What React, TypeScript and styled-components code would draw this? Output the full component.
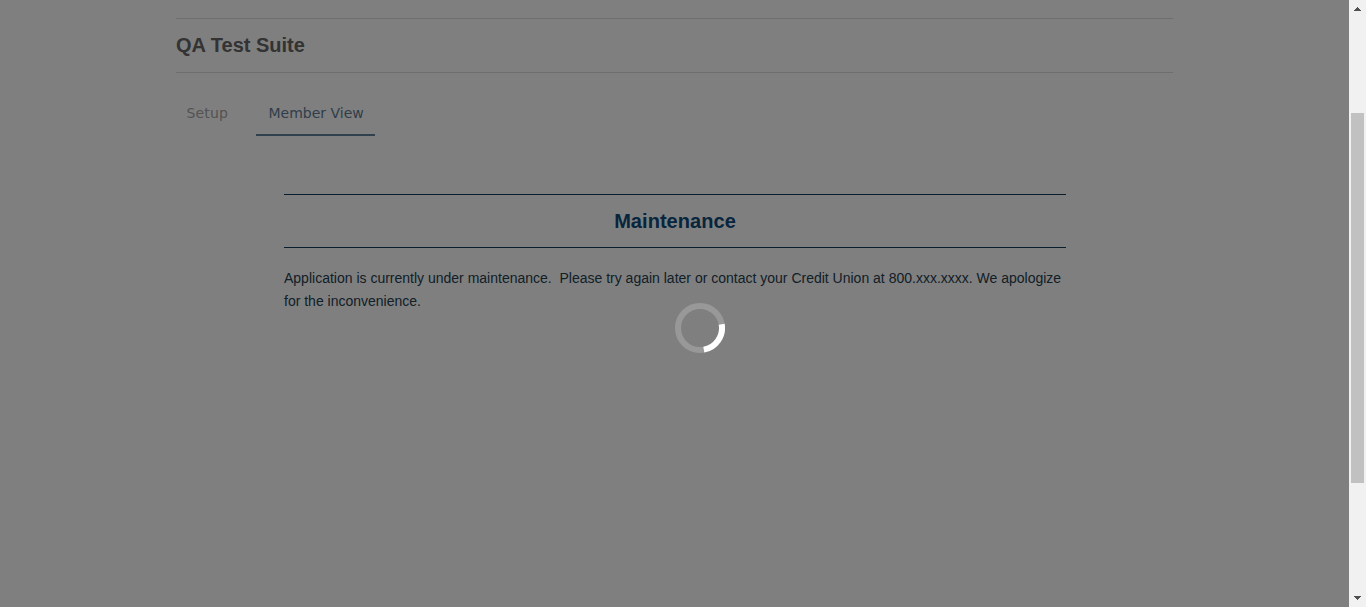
import React from "react";
import styled, { createGlobalStyle } from "styled-components";

const GlobalStyle = createGlobalStyle`
  * { box-sizing: border-box; }
  body { margin: 0; overflow: hidden; background: #fff; }
`;

const Window = styled.div`
  display: flex;
  height: 607px;
  width: 1366px;
  overflow: hidden;
  font-family: "Liberation Sans", Arial, sans-serif;
`;

const Viewport = styled.div`
  position: relative;
  display: flex;
  flex-direction: column;
  width: 1349px;
  background: #fff;
`;

const Page = styled.main`
  flex: 1;
  width: 997px;
  margin: 18px 0 0 176px;
`;

const SuiteHeader = styled.header`
  height: 55px;
  border-top: 1px solid #ddd;
  border-bottom: 1px solid #ddd;
`;

const SuiteTitle = styled.h1`
  margin: 0;
  font-size: 20px;
  line-height: 52px;
  color: #666;
`;

const Tabs = styled.nav`
  display: flex;
  gap: 16px;
  margin-top: 17px;
`;

const Tab = styled.a<{ $active?: boolean }>`
  width: ${(p) => (p.$active ? 119 : 64)}px;
  height: 46px;
  padding-left: ${(p) => (p.$active ? 12.5 : 10.5)}px;
  border-bottom: 2px solid ${(p) => (p.$active ? "#5f829d" : "transparent")};
  font: 14px/46px "DejaVu Sans", Verdana, sans-serif;
  letter-spacing: ${(p) => (p.$active ? 0 : 0.15)}px;
  white-space: nowrap;
  color: ${(p) => (p.$active ? "#5f7d96" : "#a6a6a6")};
`;

const Notice = styled.section`
  width: 782px;
  margin: 58px 0 0 108px;
`;

const NoticeTitle = styled.h2`
  height: 54px;
  margin: 0;
  border-top: 1px solid #123c5a;
  border-bottom: 1px solid #123c5a;
  font-size: 20px;
  line-height: 52px;
  letter-spacing: 0.05px;
  text-align: center;
  color: #0f4c7a;
`;

const NoticeText = styled.p`
  margin: 19px 0 0;
  font-size: 14px;
  line-height: 23px;
  white-space: pre-wrap;
  color: #25404f;
`;

const Overlay = styled.div`
  position: absolute;
  inset: 0;
  background: rgba(0, 0, 0, 0.5);
`;

const Spinner = styled.svg`
  position: absolute;
  left: 675px;
  top: 303px;
  width: 50px;
  height: 50px;
`;

const Scrollbar = styled.aside`
  display: flex;
  flex-direction: column;
  width: 17px;
  background: #f1f1f1;
`;

const Arrow = styled.svg`
  display: block;
  width: 17px;
  height: 17px;
  fill: #505050;
`;

const Track = styled.div`
  flex: 1;
  padding: 96px 2px 0;
`;

const Thumb = styled.div`
  height: 370px;
  background: #c1c1c1;
`;

export default function App() {
  return (
    <>
      <GlobalStyle />
      <Window>
        <Viewport>
          <Page>
            <SuiteHeader>
              <SuiteTitle>QA Test Suite</SuiteTitle>
            </SuiteHeader>
            <Tabs>
              <Tab>Setup</Tab>
              <Tab $active>Member View</Tab>
            </Tabs>
            <Notice>
              <NoticeTitle>Maintenance</NoticeTitle>
              <NoticeText>
                {"Application is currently under maintenance.  Please try again later or contact your Credit Union at 800.xxx.xxxx. We apologize for the inconvenience."}
              </NoticeText>
            </Notice>
          </Page>
          <Overlay>
            <Spinner viewBox="0 0 50 50" fill="none" strokeWidth="6">
              <circle cx="25" cy="25" r="22" stroke="#fff" strokeOpacity="0.2" />
              <path d="M46.67 21.18A22 22 0 0 1 28.82 46.67" stroke="#fff" />
            </Spinner>
          </Overlay>
        </Viewport>
        <Scrollbar>
          <Arrow viewBox="0 0 17 17" shapeRendering="crispEdges">
            <path d="M8 7h1v1h1v1h1v1h1v1H5v-1h1V9h1V8h1z" />
          </Arrow>
          <Track>
            <Thumb />
          </Track>
          <Arrow viewBox="0 0 17 17" shapeRendering="crispEdges">
            <path d="M5 6h7v1h-1v1h-1v1H9v1H8V9H7V8H6V7H5z" />
          </Arrow>
        </Scrollbar>
      </Window>
    </>
  );
}
